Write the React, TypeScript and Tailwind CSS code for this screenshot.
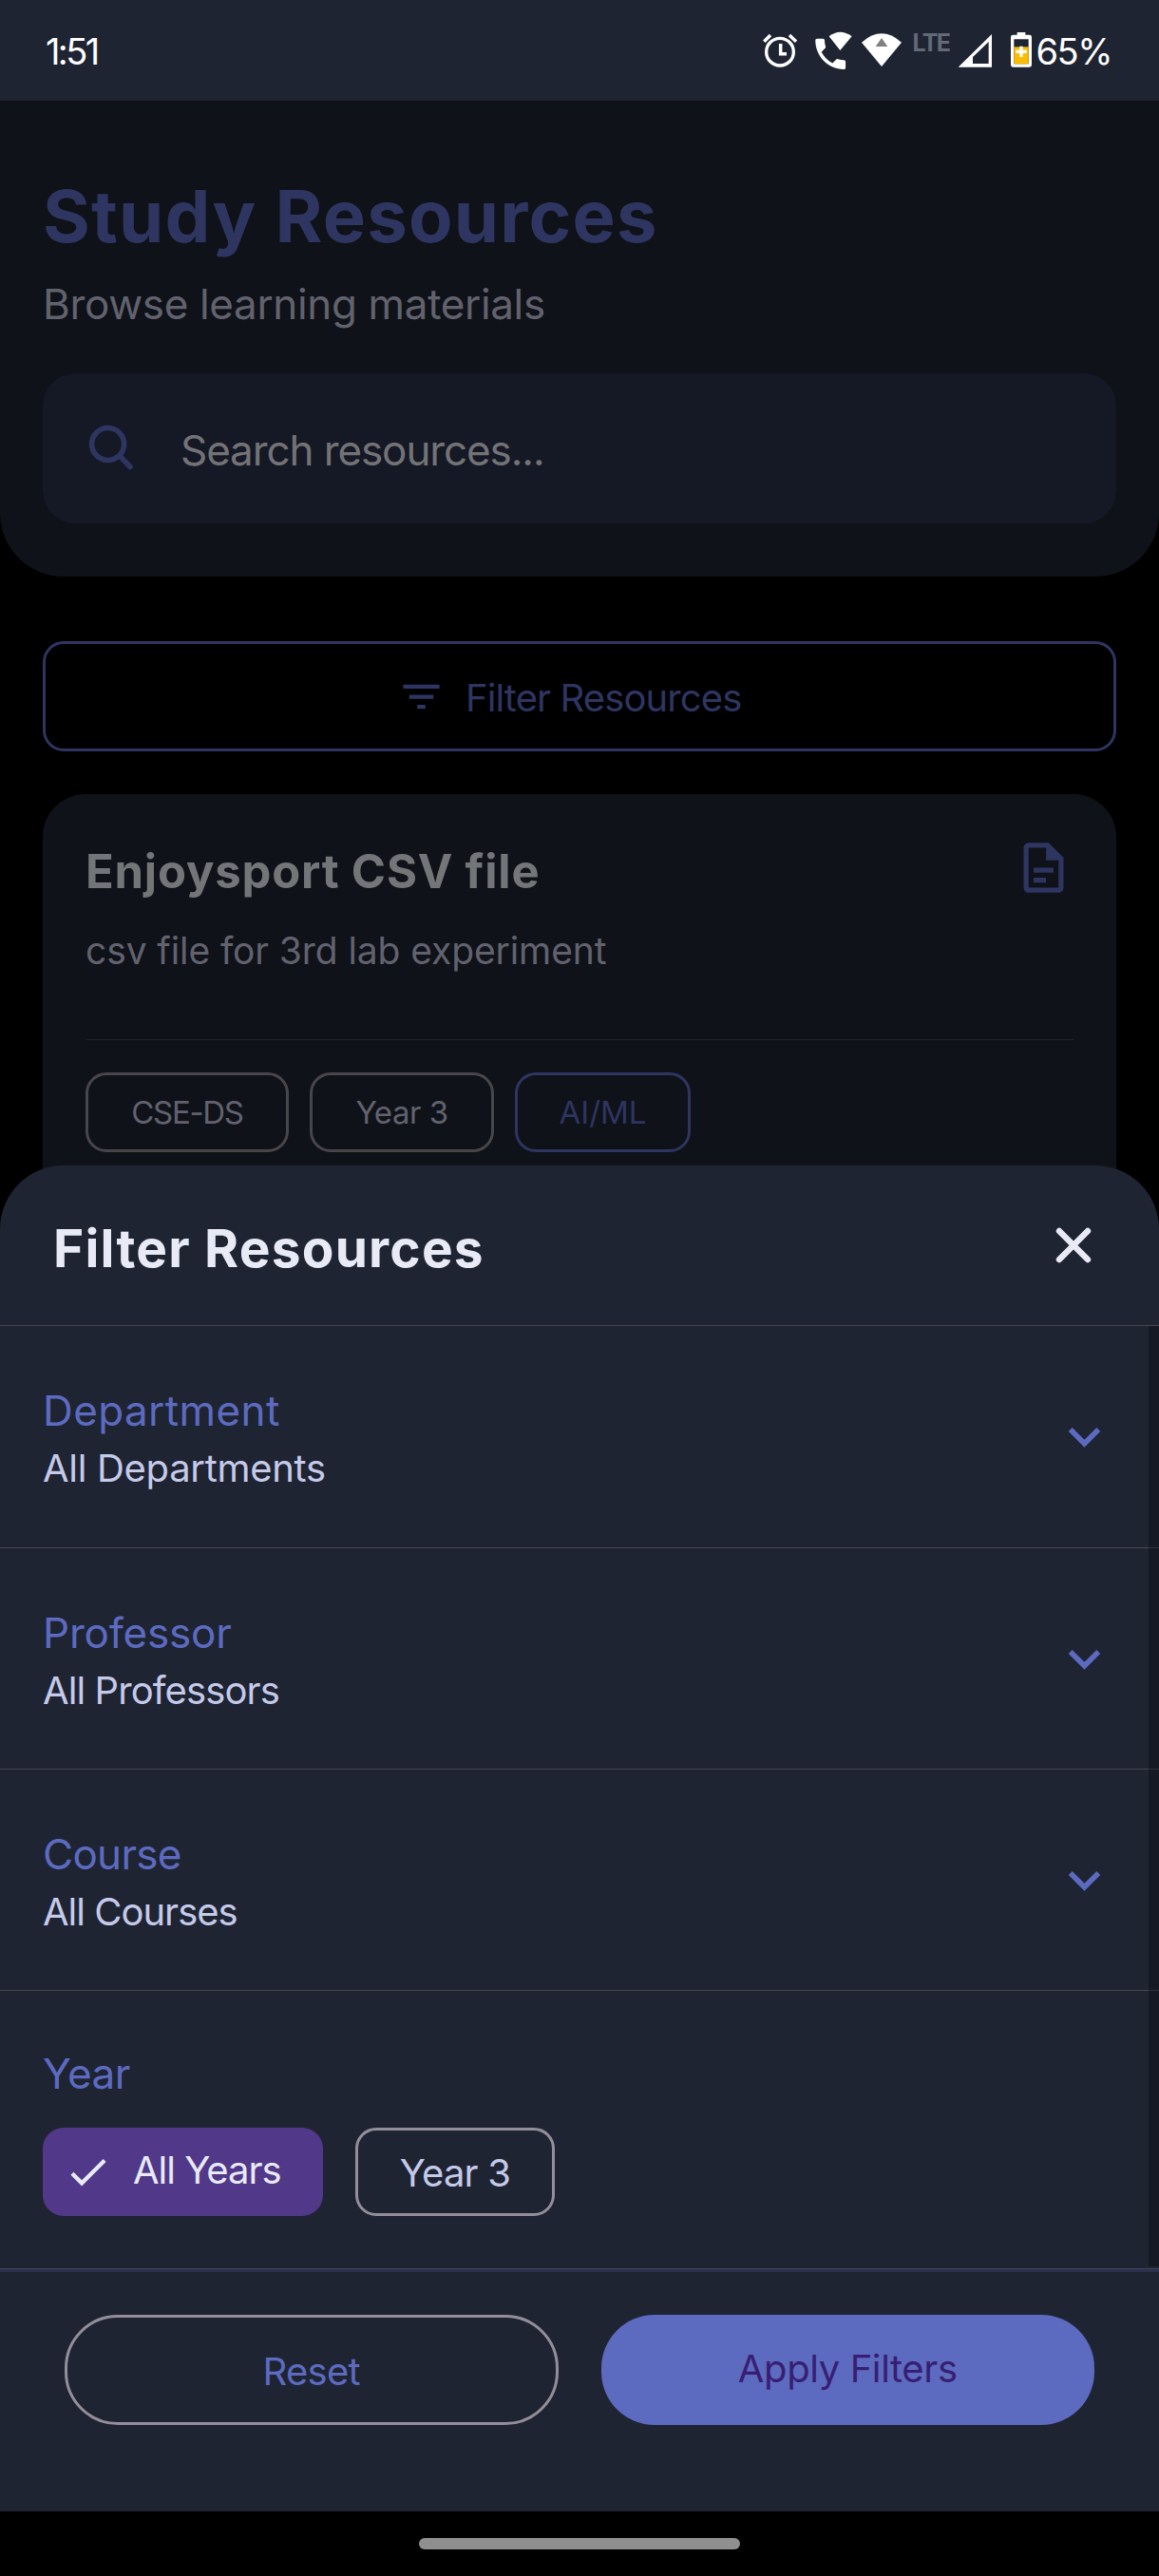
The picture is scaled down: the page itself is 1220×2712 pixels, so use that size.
import type { ReactNode } from "react";

function StatusBar() {
  return (
    <header className="flex h-[106px] shrink-0 items-start bg-[#1f2433] pt-6 text-white">
      <span className="ml-[48px] text-[38px] leading-[60px] tracking-[-2.6px]">1:51</span>
      <div className="ml-auto mr-[50px] flex h-[60px] items-start">
        <svg width="160" height="60" viewBox="0 0 480 180" fill="none">
          <circle cx="75" cy="92" r="43" stroke="#fff" strokeWidth="10" />
          <path d="M77 66V98H96M25 59L45 39M126 59L105 39" stroke="#fff" strokeWidth="10.5" />
          <path
            transform="translate(171 34) scale(5.3 5.38)"
            fill="#fff"
            d="M6.62 10.79c1.44 2.83 3.76 5.14 6.59 6.59l2.2-2.2c.27-.27.67-.36 1.02-.24 1.12.37 2.33.57 3.57.57.55 0 1 .45 1 1V20c0 .55-.45 1-1 1-9.39 0-17-7.61-17-17 0-.55.45-1 1-1h3.5c.55 0 1 .45 1 1 0 1.25.2 2.45.57 3.57.11.35.03.74-.25 1.02l-2.2 2.2z"
          />
          <path d="M265 87L230 43Q265 16 302 43Z" fill="#fff" />
          <path d="M396 138L333 62Q396 6 459 62Z" fill="#fff" />
          <path d="M396 48L415 75H377Z" fill="#808080" />
        </svg>
        <span className="ml-[5px] w-[45px] whitespace-nowrap pt-[6px] text-[25px] font-bold leading-[30px] tracking-[-1.6px] text-[#656975]">
          LTE
        </span>
        <svg width="84" height="60" viewBox="630 0 252 180">
          <path fill="#fff" fillRule="evenodd" d="M638 140L744 36V140ZM684 129H734V60L684 108Z" />
          <path
            fill="#fff"
            fillRule="evenodd"
            d="M824 30H850V38H863Q870 38 870 45V133Q870 140 863 140H811Q804 140 804 133V45Q804 38 811 38H824ZM814 52V130H860V52Z"
          />
          <path fill="#fbbc04" d="M814 76H860V130H814Z" />
          <path d="M837 74V108M820 91H854" stroke="#fff" strokeWidth="10" />
        </svg>
        <span className="ml-px text-[38px] leading-[60px] tracking-[-1.5px]">65%</span>
      </div>
    </header>
  );
}

function PageHeader() {
  return (
    <section className="h-[501px] shrink-0 rounded-b-[67px] bg-[#0f1218] px-[45px] pt-[76px]">
      <h1 className="whitespace-nowrap text-[76px] font-bold leading-[90px] tracking-[1.2px] text-[#2e3561]">
        Study Resources
      </h1>
      <p className="mt-[18px] whitespace-nowrap text-[44px] leading-[60px] tracking-[-0.35px] text-[#62626f]">
        Browse learning materials
      </p>
      <div className="mt-[43px] flex h-[158px] items-center rounded-[34px] bg-[#151825] pl-[41px]">
        <svg width="60" height="60" viewBox="0 0 60 60" fill="none" stroke="#2e3561" strokeWidth="5.6">
          <circle cx="27.6" cy="25.5" r="17" />
          <path d="M40 38L51 49.5" strokeLinecap="round" />
        </svg>
        <span className="ml-[44px] whitespace-nowrap pt-1 text-[44px] leading-[60px] tracking-[-1.1px] text-[#737376]">
          Search resources...
        </span>
      </div>
    </section>
  );
}

function Tag({ className, children }: { className: string; children: ReactNode }) {
  return (
    <span
      className={`flex h-[84px] items-center justify-center rounded-[22px] border-[3px] pt-px text-[33px] ${className}`}
    >
      {children}
    </span>
  );
}

function ResourceCard() {
  return (
    <article className="mt-[45px] h-[500px] shrink-0 rounded-[45px] bg-[#0f1218] px-[45px] pt-[46px]">
      <div className="flex items-start justify-between">
        <div className="whitespace-nowrap pt-[6px]">
          <h2 className="text-[49px] font-bold leading-[60px] tracking-[0.8px] text-[#747579]">
            Enjoysport CSV file
          </h2>
          <p className="mt-[28px] text-[39px] leading-[50px] tracking-[-0.1px] text-[#62626f]">
            csv file for 3rd lab experiment
          </p>
        </div>
        <svg width="63" height="63" viewBox="0 0 24 24" fill="#2e3561">
          <path d="M6,2A2,2 0 0,0 4,4V20A2,2 0 0,0 6,22H18A2,2 0 0,0 20,20V8L14,2H6M6,4H13V9H18V20H6V4M8,12V14H16V12H8M8,16V18H13V16H8Z" />
        </svg>
      </div>
      <div className="mt-[68px] h-px bg-[#212124]" />
      <div className="mt-[34px] flex">
        <Tag className="w-[214px] border-[#49464b] tracking-[-1.3px] text-[#62626f]">CSE-DS</Tag>
        <Tag className="ml-[22px] w-[194px] border-[#49464b] tracking-[-0.5px] text-[#62626f]">Year 3</Tag>
        <Tag className="ml-[22px] w-[185px] border-[#2e3561] text-[#2e3561]">AI/ML</Tag>
      </div>
    </article>
  );
}

function FilterRow({ label, value, className }: { label: ReactNode; value: ReactNode; className: string }) {
  return (
    <div
      className={`flex items-start justify-between border-b border-[#49454f] pl-[45px] pr-[45px] pt-[59px] ${className}`}
    >
      <div className="whitespace-nowrap">
        <div className="text-[44px] leading-[60px] text-[#5c6bc0]">{label}</div>
        <div className="mt-[6px] text-[40px] leading-[50px] text-[#c5cae9]">{value}</div>
      </div>
      <svg className="mt-[24px]" width="67" height="67" viewBox="0 0 24 24" fill="#5c6bc0">
        <path d="M7.41,8.58L12,13.17L16.59,8.58L18,10L12,16L6,10L7.41,8.58Z" />
      </svg>
    </div>
  );
}

function FilterSheet() {
  return (
    <section className="absolute inset-x-0 bottom-[68px] flex h-[1417px] flex-col rounded-t-[67px] bg-[#1f2433]">
      <div className="flex h-[169px] shrink-0 items-center justify-between border-b border-[#49454f] pl-[56px] pr-[66px]">
        <h2 className="whitespace-nowrap pt-[5px] text-[55px] font-bold leading-[60px] tracking-[1.2px] text-[#e8eaf6]">
          Filter Resources
        </h2>
        <svg width="48" height="48" viewBox="0 0 48 48" stroke="#e8eaf6" strokeWidth="6.4" strokeLinecap="round">
          <path d="M9 9L39 39M39 9L9 39" />
        </svg>
      </div>
      <div className="relative flex h-[992px] shrink-0 flex-col">
        <FilterRow
          className="h-[234px]"
          label={<span className="tracking-[0.4px]">Department</span>}
          value={<span className="tracking-[-0.3px]">All Departments</span>}
        />
        <FilterRow
          className="h-[233px]"
          label={<span className="tracking-[-0.2px]">Professor</span>}
          value={<span className="tracking-[-0.9px]">All Professors</span>}
        />
        <FilterRow
          className="h-[233px]"
          label={<span className="tracking-[-0.7px]">Course</span>}
          value={<span className="tracking-[-1px]">All Courses</span>}
        />
        <div className="px-[45px] pt-[57px]">
          <div className="text-[44px] leading-[60px] tracking-[-0.5px] text-[#5c6bc0]">Year</div>
          <div className="mt-[27px] flex whitespace-nowrap text-[40px]">
            <div className="flex h-[93px] w-[295px] items-center rounded-[22px] bg-[#513889] pl-[22px] text-[#e8eaf6]">
              <svg width="51" height="51" viewBox="0 0 24 24" fill="#e8eaf6">
                <path d="M21,7L9,19L3.5,13.5L4.91,12.09L9,16.17L19.59,5.59L21,7Z" />
              </svg>
              <span className="ml-[22px] pb-1 leading-[60px] tracking-[-1px]">All Years</span>
            </div>
            <div className="ml-[34px] flex h-[93px] w-[210px] items-center justify-center rounded-[22px] border-[3px] border-[#938f99] pt-[2px] tracking-[-0.8px] text-[#c5cae9]">
              Year 3
            </div>
          </div>
        </div>
        <div className="absolute right-0 top-0 h-[990px] w-[11px] bg-black/30" />
      </div>
      <div className="grow border-t border-[#49454f]">
        <div className="h-[3px] bg-[#2a3050]" />
        <div className="flex gap-[45px] px-[68px] pt-[45px]">
          <button className="flex h-[116px] w-[520px] items-center justify-center rounded-[56px] border-[3px] border-[#938f99] pt-[3px] text-[40px] tracking-[-0.7px] text-[#5c6bc0]">
            Reset
          </button>
          <button className="flex h-[116px] w-[520px] items-center justify-center rounded-[56px] bg-[#5c6bc0] pb-[3px] text-[40px] tracking-[-0.4px] text-[#381e72]">
            Apply Filters
          </button>
        </div>
      </div>
    </section>
  );
}

export default function App() {
  return (
    <div className="relative flex h-[2712px] w-[1220px] flex-col overflow-hidden bg-black font-['Inter',sans-serif]">
      <StatusBar />
      <PageHeader />
      <main className="flex flex-col px-[45px] pt-[68px]">
        <button className="flex h-[116px] shrink-0 items-center rounded-[22px] border-[3px] border-[#2e3561] pl-[370px] text-[#2e3561]">
          <svg width="51" height="51" viewBox="0 0 24 24" fill="#2e3561">
            <path d="M6,13H18V11H6M3,6V8H21V6M10,18H14V16H10V18Z" />
          </svg>
          <span className="ml-[21px] whitespace-nowrap pt-[3px] text-[40px] leading-[60px] tracking-[-0.9px]">
            Filter Resources
          </span>
        </button>
        <ResourceCard />
      </main>
      <FilterSheet />
      <footer className="absolute inset-x-0 bottom-0 flex h-[68px] justify-center bg-black pt-[28px]">
        <div className="h-[12px] w-[338px] rounded-[6px] bg-[#8f8f8f]" />
      </footer>
    </div>
  );
}
